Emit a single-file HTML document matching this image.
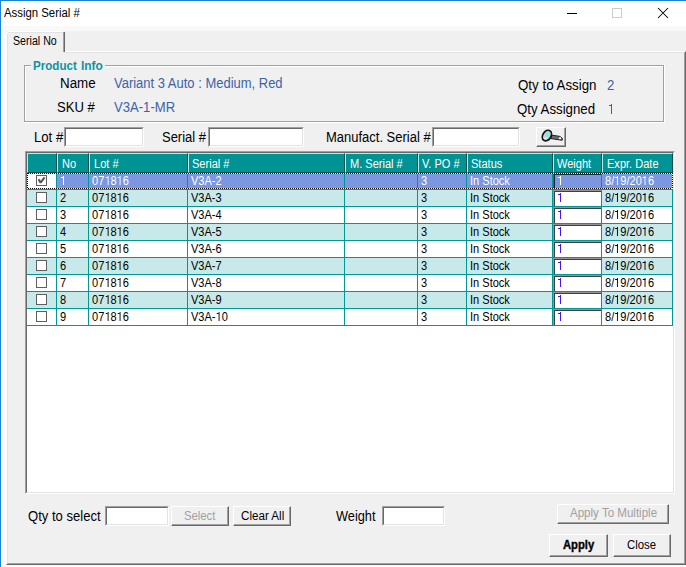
<!DOCTYPE html>
<html><head><meta charset="utf-8">
<style>
*{margin:0;padding:0;box-sizing:border-box}
html,body{width:686px;height:567px;overflow:hidden}
body{position:relative;background:#f0f0f0;font-family:"Liberation Sans",sans-serif;color:#000}
.a{position:absolute}
.t{position:absolute;white-space:nowrap;line-height:1;transform-origin:0 0}
.tb{position:absolute;background:#fff;border-top:1px solid #a0a0a0;border-left:1px solid #a0a0a0;border-right:1px solid #fff;border-bottom:1px solid #fff}
.tb:after{content:"";position:absolute;left:0;top:0;right:0;bottom:0;border-top:1px solid #696969;border-left:1px solid #696969;border-right:1px solid #e3e3e3;border-bottom:1px solid #e3e3e3}
.btn{position:absolute;background:#f0f0f0;border-top:1px solid #fff;border-left:1px solid #fff;border-right:1px solid #696969;border-bottom:1px solid #696969}
.btn:after{content:"";position:absolute;left:0;top:0;right:0;bottom:0;border-right:1px solid #a0a0a0;border-bottom:1px solid #a0a0a0}
.g{font-size:12px;transform:scaleX(0.92)}
.o{display:inline-block;width:6.67px;height:9px;position:relative;font-style:normal}
.o:before{content:'';position:absolute;left:3.3px;top:0;width:1.15px;height:9px;background:currentColor}
.o:after{content:'';position:absolute;left:1.3px;top:1px;width:2.2px;height:1px;background:currentColor}
</style></head><body>

<div class="a" style="left:0;top:0;width:686px;height:26px;background:#fff"></div>
<div class="a" style="left:0;top:0;width:686px;height:1px;background:#1883d7"></div>
<div class="a" style="left:0;top:0;width:1px;height:567px;background:#1883d7"></div>
<div class="t" style="left:4.40px;top:7px;font-size:12.5px;transform:scaleX(0.909);">Assign Serial #</div>
<div class="a" style="left:567px;top:13px;width:10px;height:1px;background:#000"></div>
<div class="a" style="left:612px;top:8px;width:10px;height:10px;border:1px solid #cccccc"></div>
<svg class="a" style="left:657px;top:7px" width="12" height="12" viewBox="0 0 12 12"><path d="M1 1L11 11M11 1L1 11" stroke="#000" stroke-width="1.05" fill="none"/></svg>
<div class="a" style="left:1px;top:26px;width:685px;height:5px;background:#f9f9f9"></div>
<div class="a" style="left:1px;top:26px;width:5px;height:541px;background:#f9f9f9"></div>
<div class="a" style="left:1px;top:565px;width:685px;height:2px;background:#f9f9f9"></div>
<div class="a" style="left:1px;top:26px;width:1px;height:541px;background:#fff"></div>
<div class="a" style="left:6px;top:51px;width:680px;height:514px;border-top:1px solid #fff;border-left:1px solid #fff;border-right:1px solid #696969;border-bottom:1px solid #696969"></div>
<div class="a" style="left:7px;top:52px;width:678px;height:512px;border-top:1px solid #e3e3e3;border-left:1px solid #e3e3e3;border-right:1px solid #a0a0a0;border-bottom:1px solid #a0a0a0"></div>
<div class="a" style="left:7px;top:32px;width:57px;height:22px;background:#f0f0f0"></div>
<div class="a" style="left:8px;top:31px;width:55px;height:1px;background:#fff"></div>
<div class="a" style="left:8px;top:32px;width:55px;height:1px;background:#e3e3e3"></div>
<div class="a" style="left:7px;top:32px;width:1px;height:1px;background:#fff"></div>
<div class="a" style="left:6px;top:33px;width:1px;height:20px;background:#fff"></div>
<div class="a" style="left:7px;top:33px;width:1px;height:20px;background:#e3e3e3"></div>
<div class="a" style="left:63px;top:32px;width:1px;height:20px;background:#a0a0a0"></div>
<div class="a" style="left:64px;top:32px;width:1px;height:20px;background:#696969"></div>
<div class="t" style="left:13.31px;top:35px;font-size:12px;transform:scaleX(0.886);">Serial No</div>
<div class="a" style="left:24px;top:65px;width:640px;height:57px;border:1px solid #a0a0a0"></div>
<div class="a" style="left:25px;top:66px;width:638px;height:55px;border-left:1px solid #fff;border-top:1px solid #fff"></div>
<div class="a" style="left:24px;top:122px;width:641px;height:1px;background:#fff"></div>
<div class="a" style="left:664px;top:65px;width:1px;height:58px;background:#fff"></div>
<div class="a" style="left:31px;top:60px;width:74px;height:10px;background:#f0f0f0"></div>
<div class="t" style="left:32.87px;top:60px;font-size:12.5px;transform:scaleX(0.927);font-weight:bold;color:#0a95a0;">Product</div>
<div class="t" style="left:80.75px;top:60px;font-size:12.5px;transform:scaleX(0.953);font-weight:bold;color:#0a95a0;">Info</div>
<div class="t" style="left:59.65px;top:76px;font-size:14px;transform:scaleX(0.955);">Name</div>
<div class="t" style="left:56.67px;top:100px;font-size:14px;transform:scaleX(0.934);">SKU #</div>
<div class="t" style="left:518.40px;top:78px;font-size:14px;transform:scaleX(0.952);">Qty to Assign</div>
<div class="t" style="left:517.40px;top:102px;font-size:14px;transform:scaleX(0.947);">Qty Assigned</div>
<div class="t" style="left:33.66px;top:130px;font-size:14px;transform:scaleX(0.939);">Lot #</div>
<div class="t" style="left:162.27px;top:130px;font-size:14px;transform:scaleX(0.927);">Serial #</div>
<div class="t" style="left:325.67px;top:130px;font-size:14px;transform:scaleX(0.927);">Manufact. Serial #</div>
<div class="t" style="left:27.50px;top:509px;font-size:14px;transform:scaleX(0.933);">Qty to select</div>
<div class="t" style="left:336.00px;top:509px;font-size:14px;transform:scaleX(0.912);">Weight</div>
<div class="t" style="left:114.20px;top:76px;font-size:14px;transform:scaleX(0.927);color:#3b63a8;">Variant 3 Auto : Medium, Red</div>
<div class="t" style="left:114.20px;top:100px;font-size:14px;transform:scaleX(0.935);color:#3b63a8;">V3A-1-MR</div>
<div class="t" style="left:607.10px;top:78px;font-size:14px;transform:scaleX(0.940);color:#3b63a8;">2</div>
<div class="a" style="left:610.8px;top:104px;width:1.3px;height:10px;background:#3b63a8"></div><div class="a" style="left:608.5px;top:105px;width:2.3px;height:1px;background:#3b63a8"></div>
<div class="tb" style="left:64px;top:127px;width:80px;height:20px"></div>
<div class="tb" style="left:208px;top:127px;width:96px;height:20px"></div>
<div class="tb" style="left:432px;top:127px;width:88px;height:20px"></div>
<div class="btn" style="left:536px;top:127px;width:30px;height:20px"></div>
<svg class="a" style="left:540px;top:128px" width="25" height="16" viewBox="0 0 25 16">
<path d="M11 7L19.8 8.4L22.4 10.4L22.2 12.2L19.8 11.9L11 10.6Z" fill="#6e6e6e" stroke="#1e1e1e" stroke-width="1"/>
<ellipse cx="20" cy="10.2" rx="1.2" ry="1" fill="#fff"/>
<ellipse cx="6.9" cy="7.6" rx="5.6" ry="4.1" transform="rotate(-58 6.9 7.6)" fill="#d8d8d8" stroke="#161616" stroke-width="1.8"/>
<ellipse cx="7.5" cy="6.7" rx="3.6" ry="2.2" transform="rotate(-58 7.5 6.7)" fill="#8ce4f0"/>
<path d="M4.5 10.8L6.8 9.2" stroke="#fff" stroke-width="1"/>
</svg>
<div class="a" style="left:25px;top:151px;width:650px;height:343px;background:#fff;border-top:1px solid #a0a0a0;border-left:1px solid #a0a0a0;border-right:1px solid #fff;border-bottom:1px solid #fff"></div>
<div class="a" style="left:26px;top:152px;width:648px;height:341px;border-top:1px solid #696969;border-left:1px solid #696969;border-right:1px solid #e3e3e3;border-bottom:1px solid #e3e3e3"></div>
<div class="a" style="left:27px;top:153px;width:30px;height:20px;background:#009393;border-top:1px solid #bfe9e7;border-left:1px solid #bfe9e7;border-right:1px solid #005050;border-bottom:1px solid #005050"></div>
<div class="a" style="left:57px;top:153px;width:32px;height:20px;background:#009393;border-top:1px solid #bfe9e7;border-left:1px solid #bfe9e7;border-right:1px solid #005050;border-bottom:1px solid #005050"></div>
<div class="t g" style="left:61.5px;top:158px;color:#fff">No</div>
<div class="a" style="left:89px;top:153px;width:99px;height:20px;background:#009393;border-top:1px solid #bfe9e7;border-left:1px solid #bfe9e7;border-right:1px solid #005050;border-bottom:1px solid #005050"></div>
<div class="t g" style="left:93.5px;top:158px;color:#fff">Lot #</div>
<div class="a" style="left:188px;top:153px;width:157px;height:20px;background:#009393;border-top:1px solid #bfe9e7;border-left:1px solid #bfe9e7;border-right:1px solid #005050;border-bottom:1px solid #005050"></div>
<div class="t g" style="left:191.7px;top:158px;color:#fff">Serial #</div>
<div class="a" style="left:345px;top:153px;width:73px;height:20px;background:#009393;border-top:1px solid #bfe9e7;border-left:1px solid #bfe9e7;border-right:1px solid #005050;border-bottom:1px solid #005050"></div>
<div class="t g" style="left:349.5px;top:158px;color:#fff">M. Serial #</div>
<div class="a" style="left:418px;top:153px;width:49px;height:20px;background:#009393;border-top:1px solid #bfe9e7;border-left:1px solid #bfe9e7;border-right:1px solid #005050;border-bottom:1px solid #005050"></div>
<div class="t g" style="left:422px;top:158px;color:#fff">V. PO #</div>
<div class="a" style="left:467px;top:153px;width:86px;height:20px;background:#009393;border-top:1px solid #bfe9e7;border-left:1px solid #bfe9e7;border-right:1px solid #005050;border-bottom:1px solid #005050"></div>
<div class="t g" style="left:471px;top:158px;color:#fff">Status</div>
<div class="a" style="left:553px;top:153px;width:49px;height:20px;background:#009393;border-top:1px solid #bfe9e7;border-left:1px solid #bfe9e7;border-right:1px solid #005050;border-bottom:1px solid #005050"></div>
<div class="t g" style="left:557px;top:158px;color:#fff">Weight</div>
<div class="a" style="left:602px;top:153px;width:71px;height:20px;background:#009393;border-top:1px solid #bfe9e7;border-left:1px solid #bfe9e7;border-right:1px solid #005050;border-bottom:1px solid #005050"></div>
<div class="t g" style="left:606.5px;top:158px;color:#fff">Expr. Date</div>
<div class="a" style="left:27px;top:173px;width:30px;height:17px;background:#fff;border-right:1px solid #009796;border-bottom:1px solid #009796"></div>
<div class="a" style="left:57px;top:173px;width:32px;height:17px;background:#7a97df;border-right:1px solid #009796;border-bottom:1px solid #009796"></div>
<div class="a" style="left:89px;top:173px;width:99px;height:17px;background:#7a97df;border-right:1px solid #009796;border-bottom:1px solid #009796"></div>
<div class="a" style="left:188px;top:173px;width:157px;height:17px;background:#7a97df;border-right:1px solid #009796;border-bottom:1px solid #009796"></div>
<div class="a" style="left:345px;top:173px;width:73px;height:17px;background:#7a97df;border-right:1px solid #009796;border-bottom:1px solid #009796"></div>
<div class="a" style="left:418px;top:173px;width:49px;height:17px;background:#7a97df;border-right:1px solid #009796;border-bottom:1px solid #009796"></div>
<div class="a" style="left:467px;top:173px;width:86px;height:17px;background:#7a97df;border-right:1px solid #009796;border-bottom:1px solid #009796"></div>
<div class="a" style="left:553px;top:173px;width:49px;height:17px;background:#7a97df;border-right:1px solid #009796;border-bottom:1px solid #009796"></div>
<div class="a" style="left:602px;top:173px;width:71px;height:17px;background:#7a97df;border-right:1px solid #009796;border-bottom:1px solid #009796"></div>
<div class="a" style="left:36px;top:175px;width:11px;height:11px;background:#fff;border:1px solid #5f5f5f"></div>
<svg class="a" style="left:36px;top:175px" width="11" height="11" viewBox="0 0 11 11"><path d="M2.6 4.3L4.6 7.6L8.6 2.4" stroke="#555" stroke-width="2.1" stroke-linejoin="bevel" fill="none"/></svg>
<div class="t g" style="left:92px;top:175px;color:#fff">07<i class="o"></i>8<i class="o"></i>6</div>
<div class="t g" style="left:191px;top:175px;color:#fff">V3A-2</div>
<div class="t g" style="left:421px;top:175px;color:#fff">3</div>
<div class="t g" style="left:470px;top:175px;color:#fff">In Stock</div>
<div class="t g" style="left:605px;top:175px;color:#fff">8/<i class="o"></i>9/20<i class="o"></i>6</div>
<div class="a" style="left:553px;top:173px;width:48px;height:16px;background:#7a97df;border-top:1px solid rgba(0,0,0,.42);border-left:1px solid rgba(0,0,0,.42)"></div>
<div class="a" style="left:554px;top:174px;width:47px;height:15px;border-top:1px solid rgba(0,0,0,.75);border-left:1px solid rgba(0,0,0,.75)"></div>
<div class="a" style="left:560px;top:176px;width:1.3px;height:9px;background:#fff"></div><div class="a" style="left:558px;top:177px;width:2px;height:1px;background:#fff"></div>
<div class="a" style="left:63px;top:176px;width:1.1px;height:9px;background:#fff"></div><div class="a" style="left:61px;top:177px;width:2px;height:1px;background:#fff"></div>
<div class="a" style="left:27px;top:190px;width:30px;height:17px;background:#c8e9e9;border-right:1px solid #009796;border-bottom:1px solid #009796"></div>
<div class="a" style="left:57px;top:190px;width:32px;height:17px;background:#c8e9e9;border-right:1px solid #009796;border-bottom:1px solid #009796"></div>
<div class="a" style="left:89px;top:190px;width:99px;height:17px;background:#c8e9e9;border-right:1px solid #009796;border-bottom:1px solid #009796"></div>
<div class="a" style="left:188px;top:190px;width:157px;height:17px;background:#c8e9e9;border-right:1px solid #009796;border-bottom:1px solid #009796"></div>
<div class="a" style="left:345px;top:190px;width:73px;height:17px;background:#c8e9e9;border-right:1px solid #009796;border-bottom:1px solid #009796"></div>
<div class="a" style="left:418px;top:190px;width:49px;height:17px;background:#c8e9e9;border-right:1px solid #009796;border-bottom:1px solid #009796"></div>
<div class="a" style="left:467px;top:190px;width:86px;height:17px;background:#c8e9e9;border-right:1px solid #009796;border-bottom:1px solid #009796"></div>
<div class="a" style="left:553px;top:190px;width:49px;height:17px;background:#c8e9e9;border-right:1px solid #009796;border-bottom:1px solid #009796"></div>
<div class="a" style="left:602px;top:190px;width:71px;height:17px;background:#c8e9e9;border-right:1px solid #009796;border-bottom:1px solid #009796"></div>
<div class="a" style="left:36px;top:192px;width:11px;height:11px;background:#fff;border:1px solid #5f5f5f"></div>
<div class="t g" style="left:60px;top:192px;color:#000">2</div>
<div class="t g" style="left:92px;top:192px;color:#000">07<i class="o"></i>8<i class="o"></i>6</div>
<div class="t g" style="left:191px;top:192px;color:#000">V3A-3</div>
<div class="t g" style="left:421px;top:192px;color:#000">3</div>
<div class="t g" style="left:470px;top:192px;color:#000">In Stock</div>
<div class="t g" style="left:605px;top:192px;color:#000">8/<i class="o"></i>9/20<i class="o"></i>6</div>
<div class="a" style="left:553px;top:190px;width:48px;height:16px;background:#fff;border-top:1px solid rgba(0,0,0,.42);border-left:1px solid rgba(0,0,0,.42)"></div>
<div class="a" style="left:554px;top:191px;width:47px;height:15px;border-top:1px solid rgba(0,0,0,.75);border-left:1px solid rgba(0,0,0,.75)"></div>
<div class="a" style="left:560px;top:193px;width:1.3px;height:9px;background:#4a14f2"></div><div class="a" style="left:558px;top:194px;width:2px;height:1px;background:#4a14f2"></div>
<div class="a" style="left:27px;top:207px;width:30px;height:17px;background:#fff;border-right:1px solid #009796;border-bottom:1px solid #009796"></div>
<div class="a" style="left:57px;top:207px;width:32px;height:17px;background:#fff;border-right:1px solid #009796;border-bottom:1px solid #009796"></div>
<div class="a" style="left:89px;top:207px;width:99px;height:17px;background:#fff;border-right:1px solid #009796;border-bottom:1px solid #009796"></div>
<div class="a" style="left:188px;top:207px;width:157px;height:17px;background:#fff;border-right:1px solid #009796;border-bottom:1px solid #009796"></div>
<div class="a" style="left:345px;top:207px;width:73px;height:17px;background:#fff;border-right:1px solid #009796;border-bottom:1px solid #009796"></div>
<div class="a" style="left:418px;top:207px;width:49px;height:17px;background:#fff;border-right:1px solid #009796;border-bottom:1px solid #009796"></div>
<div class="a" style="left:467px;top:207px;width:86px;height:17px;background:#fff;border-right:1px solid #009796;border-bottom:1px solid #009796"></div>
<div class="a" style="left:553px;top:207px;width:49px;height:17px;background:#fff;border-right:1px solid #009796;border-bottom:1px solid #009796"></div>
<div class="a" style="left:602px;top:207px;width:71px;height:17px;background:#fff;border-right:1px solid #009796;border-bottom:1px solid #009796"></div>
<div class="a" style="left:36px;top:209px;width:11px;height:11px;background:#fff;border:1px solid #5f5f5f"></div>
<div class="t g" style="left:60px;top:209px;color:#000">3</div>
<div class="t g" style="left:92px;top:209px;color:#000">07<i class="o"></i>8<i class="o"></i>6</div>
<div class="t g" style="left:191px;top:209px;color:#000">V3A-4</div>
<div class="t g" style="left:421px;top:209px;color:#000">3</div>
<div class="t g" style="left:470px;top:209px;color:#000">In Stock</div>
<div class="t g" style="left:605px;top:209px;color:#000">8/<i class="o"></i>9/20<i class="o"></i>6</div>
<div class="a" style="left:553px;top:207px;width:48px;height:16px;background:#fff;border-top:1px solid rgba(0,0,0,.42);border-left:1px solid rgba(0,0,0,.42)"></div>
<div class="a" style="left:554px;top:208px;width:47px;height:15px;border-top:1px solid rgba(0,0,0,.75);border-left:1px solid rgba(0,0,0,.75)"></div>
<div class="a" style="left:560px;top:210px;width:1.3px;height:9px;background:#4a14f2"></div><div class="a" style="left:558px;top:211px;width:2px;height:1px;background:#4a14f2"></div>
<div class="a" style="left:27px;top:224px;width:30px;height:17px;background:#c8e9e9;border-right:1px solid #009796;border-bottom:1px solid #009796"></div>
<div class="a" style="left:57px;top:224px;width:32px;height:17px;background:#c8e9e9;border-right:1px solid #009796;border-bottom:1px solid #009796"></div>
<div class="a" style="left:89px;top:224px;width:99px;height:17px;background:#c8e9e9;border-right:1px solid #009796;border-bottom:1px solid #009796"></div>
<div class="a" style="left:188px;top:224px;width:157px;height:17px;background:#c8e9e9;border-right:1px solid #009796;border-bottom:1px solid #009796"></div>
<div class="a" style="left:345px;top:224px;width:73px;height:17px;background:#c8e9e9;border-right:1px solid #009796;border-bottom:1px solid #009796"></div>
<div class="a" style="left:418px;top:224px;width:49px;height:17px;background:#c8e9e9;border-right:1px solid #009796;border-bottom:1px solid #009796"></div>
<div class="a" style="left:467px;top:224px;width:86px;height:17px;background:#c8e9e9;border-right:1px solid #009796;border-bottom:1px solid #009796"></div>
<div class="a" style="left:553px;top:224px;width:49px;height:17px;background:#c8e9e9;border-right:1px solid #009796;border-bottom:1px solid #009796"></div>
<div class="a" style="left:602px;top:224px;width:71px;height:17px;background:#c8e9e9;border-right:1px solid #009796;border-bottom:1px solid #009796"></div>
<div class="a" style="left:36px;top:226px;width:11px;height:11px;background:#fff;border:1px solid #5f5f5f"></div>
<div class="t g" style="left:60px;top:226px;color:#000">4</div>
<div class="t g" style="left:92px;top:226px;color:#000">07<i class="o"></i>8<i class="o"></i>6</div>
<div class="t g" style="left:191px;top:226px;color:#000">V3A-5</div>
<div class="t g" style="left:421px;top:226px;color:#000">3</div>
<div class="t g" style="left:470px;top:226px;color:#000">In Stock</div>
<div class="t g" style="left:605px;top:226px;color:#000">8/<i class="o"></i>9/20<i class="o"></i>6</div>
<div class="a" style="left:553px;top:224px;width:48px;height:16px;background:#fff;border-top:1px solid rgba(0,0,0,.42);border-left:1px solid rgba(0,0,0,.42)"></div>
<div class="a" style="left:554px;top:225px;width:47px;height:15px;border-top:1px solid rgba(0,0,0,.75);border-left:1px solid rgba(0,0,0,.75)"></div>
<div class="a" style="left:560px;top:227px;width:1.3px;height:9px;background:#4a14f2"></div><div class="a" style="left:558px;top:228px;width:2px;height:1px;background:#4a14f2"></div>
<div class="a" style="left:27px;top:241px;width:30px;height:17px;background:#fff;border-right:1px solid #009796;border-bottom:1px solid #009796"></div>
<div class="a" style="left:57px;top:241px;width:32px;height:17px;background:#fff;border-right:1px solid #009796;border-bottom:1px solid #009796"></div>
<div class="a" style="left:89px;top:241px;width:99px;height:17px;background:#fff;border-right:1px solid #009796;border-bottom:1px solid #009796"></div>
<div class="a" style="left:188px;top:241px;width:157px;height:17px;background:#fff;border-right:1px solid #009796;border-bottom:1px solid #009796"></div>
<div class="a" style="left:345px;top:241px;width:73px;height:17px;background:#fff;border-right:1px solid #009796;border-bottom:1px solid #009796"></div>
<div class="a" style="left:418px;top:241px;width:49px;height:17px;background:#fff;border-right:1px solid #009796;border-bottom:1px solid #009796"></div>
<div class="a" style="left:467px;top:241px;width:86px;height:17px;background:#fff;border-right:1px solid #009796;border-bottom:1px solid #009796"></div>
<div class="a" style="left:553px;top:241px;width:49px;height:17px;background:#fff;border-right:1px solid #009796;border-bottom:1px solid #009796"></div>
<div class="a" style="left:602px;top:241px;width:71px;height:17px;background:#fff;border-right:1px solid #009796;border-bottom:1px solid #009796"></div>
<div class="a" style="left:36px;top:243px;width:11px;height:11px;background:#fff;border:1px solid #5f5f5f"></div>
<div class="t g" style="left:60px;top:243px;color:#000">5</div>
<div class="t g" style="left:92px;top:243px;color:#000">07<i class="o"></i>8<i class="o"></i>6</div>
<div class="t g" style="left:191px;top:243px;color:#000">V3A-6</div>
<div class="t g" style="left:421px;top:243px;color:#000">3</div>
<div class="t g" style="left:470px;top:243px;color:#000">In Stock</div>
<div class="t g" style="left:605px;top:243px;color:#000">8/<i class="o"></i>9/20<i class="o"></i>6</div>
<div class="a" style="left:553px;top:241px;width:48px;height:16px;background:#fff;border-top:1px solid rgba(0,0,0,.42);border-left:1px solid rgba(0,0,0,.42)"></div>
<div class="a" style="left:554px;top:242px;width:47px;height:15px;border-top:1px solid rgba(0,0,0,.75);border-left:1px solid rgba(0,0,0,.75)"></div>
<div class="a" style="left:560px;top:244px;width:1.3px;height:9px;background:#4a14f2"></div><div class="a" style="left:558px;top:245px;width:2px;height:1px;background:#4a14f2"></div>
<div class="a" style="left:27px;top:258px;width:30px;height:17px;background:#c8e9e9;border-right:1px solid #009796;border-bottom:1px solid #009796"></div>
<div class="a" style="left:57px;top:258px;width:32px;height:17px;background:#c8e9e9;border-right:1px solid #009796;border-bottom:1px solid #009796"></div>
<div class="a" style="left:89px;top:258px;width:99px;height:17px;background:#c8e9e9;border-right:1px solid #009796;border-bottom:1px solid #009796"></div>
<div class="a" style="left:188px;top:258px;width:157px;height:17px;background:#c8e9e9;border-right:1px solid #009796;border-bottom:1px solid #009796"></div>
<div class="a" style="left:345px;top:258px;width:73px;height:17px;background:#c8e9e9;border-right:1px solid #009796;border-bottom:1px solid #009796"></div>
<div class="a" style="left:418px;top:258px;width:49px;height:17px;background:#c8e9e9;border-right:1px solid #009796;border-bottom:1px solid #009796"></div>
<div class="a" style="left:467px;top:258px;width:86px;height:17px;background:#c8e9e9;border-right:1px solid #009796;border-bottom:1px solid #009796"></div>
<div class="a" style="left:553px;top:258px;width:49px;height:17px;background:#c8e9e9;border-right:1px solid #009796;border-bottom:1px solid #009796"></div>
<div class="a" style="left:602px;top:258px;width:71px;height:17px;background:#c8e9e9;border-right:1px solid #009796;border-bottom:1px solid #009796"></div>
<div class="a" style="left:36px;top:260px;width:11px;height:11px;background:#fff;border:1px solid #5f5f5f"></div>
<div class="t g" style="left:60px;top:260px;color:#000">6</div>
<div class="t g" style="left:92px;top:260px;color:#000">07<i class="o"></i>8<i class="o"></i>6</div>
<div class="t g" style="left:191px;top:260px;color:#000">V3A-7</div>
<div class="t g" style="left:421px;top:260px;color:#000">3</div>
<div class="t g" style="left:470px;top:260px;color:#000">In Stock</div>
<div class="t g" style="left:605px;top:260px;color:#000">8/<i class="o"></i>9/20<i class="o"></i>6</div>
<div class="a" style="left:553px;top:258px;width:48px;height:16px;background:#fff;border-top:1px solid rgba(0,0,0,.42);border-left:1px solid rgba(0,0,0,.42)"></div>
<div class="a" style="left:554px;top:259px;width:47px;height:15px;border-top:1px solid rgba(0,0,0,.75);border-left:1px solid rgba(0,0,0,.75)"></div>
<div class="a" style="left:560px;top:261px;width:1.3px;height:9px;background:#4a14f2"></div><div class="a" style="left:558px;top:262px;width:2px;height:1px;background:#4a14f2"></div>
<div class="a" style="left:27px;top:275px;width:30px;height:17px;background:#fff;border-right:1px solid #009796;border-bottom:1px solid #009796"></div>
<div class="a" style="left:57px;top:275px;width:32px;height:17px;background:#fff;border-right:1px solid #009796;border-bottom:1px solid #009796"></div>
<div class="a" style="left:89px;top:275px;width:99px;height:17px;background:#fff;border-right:1px solid #009796;border-bottom:1px solid #009796"></div>
<div class="a" style="left:188px;top:275px;width:157px;height:17px;background:#fff;border-right:1px solid #009796;border-bottom:1px solid #009796"></div>
<div class="a" style="left:345px;top:275px;width:73px;height:17px;background:#fff;border-right:1px solid #009796;border-bottom:1px solid #009796"></div>
<div class="a" style="left:418px;top:275px;width:49px;height:17px;background:#fff;border-right:1px solid #009796;border-bottom:1px solid #009796"></div>
<div class="a" style="left:467px;top:275px;width:86px;height:17px;background:#fff;border-right:1px solid #009796;border-bottom:1px solid #009796"></div>
<div class="a" style="left:553px;top:275px;width:49px;height:17px;background:#fff;border-right:1px solid #009796;border-bottom:1px solid #009796"></div>
<div class="a" style="left:602px;top:275px;width:71px;height:17px;background:#fff;border-right:1px solid #009796;border-bottom:1px solid #009796"></div>
<div class="a" style="left:36px;top:277px;width:11px;height:11px;background:#fff;border:1px solid #5f5f5f"></div>
<div class="t g" style="left:60px;top:277px;color:#000">7</div>
<div class="t g" style="left:92px;top:277px;color:#000">07<i class="o"></i>8<i class="o"></i>6</div>
<div class="t g" style="left:191px;top:277px;color:#000">V3A-8</div>
<div class="t g" style="left:421px;top:277px;color:#000">3</div>
<div class="t g" style="left:470px;top:277px;color:#000">In Stock</div>
<div class="t g" style="left:605px;top:277px;color:#000">8/<i class="o"></i>9/20<i class="o"></i>6</div>
<div class="a" style="left:553px;top:275px;width:48px;height:16px;background:#fff;border-top:1px solid rgba(0,0,0,.42);border-left:1px solid rgba(0,0,0,.42)"></div>
<div class="a" style="left:554px;top:276px;width:47px;height:15px;border-top:1px solid rgba(0,0,0,.75);border-left:1px solid rgba(0,0,0,.75)"></div>
<div class="a" style="left:560px;top:278px;width:1.3px;height:9px;background:#4a14f2"></div><div class="a" style="left:558px;top:279px;width:2px;height:1px;background:#4a14f2"></div>
<div class="a" style="left:27px;top:292px;width:30px;height:17px;background:#c8e9e9;border-right:1px solid #009796;border-bottom:1px solid #009796"></div>
<div class="a" style="left:57px;top:292px;width:32px;height:17px;background:#c8e9e9;border-right:1px solid #009796;border-bottom:1px solid #009796"></div>
<div class="a" style="left:89px;top:292px;width:99px;height:17px;background:#c8e9e9;border-right:1px solid #009796;border-bottom:1px solid #009796"></div>
<div class="a" style="left:188px;top:292px;width:157px;height:17px;background:#c8e9e9;border-right:1px solid #009796;border-bottom:1px solid #009796"></div>
<div class="a" style="left:345px;top:292px;width:73px;height:17px;background:#c8e9e9;border-right:1px solid #009796;border-bottom:1px solid #009796"></div>
<div class="a" style="left:418px;top:292px;width:49px;height:17px;background:#c8e9e9;border-right:1px solid #009796;border-bottom:1px solid #009796"></div>
<div class="a" style="left:467px;top:292px;width:86px;height:17px;background:#c8e9e9;border-right:1px solid #009796;border-bottom:1px solid #009796"></div>
<div class="a" style="left:553px;top:292px;width:49px;height:17px;background:#c8e9e9;border-right:1px solid #009796;border-bottom:1px solid #009796"></div>
<div class="a" style="left:602px;top:292px;width:71px;height:17px;background:#c8e9e9;border-right:1px solid #009796;border-bottom:1px solid #009796"></div>
<div class="a" style="left:36px;top:294px;width:11px;height:11px;background:#fff;border:1px solid #5f5f5f"></div>
<div class="t g" style="left:60px;top:294px;color:#000">8</div>
<div class="t g" style="left:92px;top:294px;color:#000">07<i class="o"></i>8<i class="o"></i>6</div>
<div class="t g" style="left:191px;top:294px;color:#000">V3A-9</div>
<div class="t g" style="left:421px;top:294px;color:#000">3</div>
<div class="t g" style="left:470px;top:294px;color:#000">In Stock</div>
<div class="t g" style="left:605px;top:294px;color:#000">8/<i class="o"></i>9/20<i class="o"></i>6</div>
<div class="a" style="left:553px;top:292px;width:48px;height:16px;background:#fff;border-top:1px solid rgba(0,0,0,.42);border-left:1px solid rgba(0,0,0,.42)"></div>
<div class="a" style="left:554px;top:293px;width:47px;height:15px;border-top:1px solid rgba(0,0,0,.75);border-left:1px solid rgba(0,0,0,.75)"></div>
<div class="a" style="left:560px;top:295px;width:1.3px;height:9px;background:#4a14f2"></div><div class="a" style="left:558px;top:296px;width:2px;height:1px;background:#4a14f2"></div>
<div class="a" style="left:27px;top:309px;width:30px;height:17px;background:#fff;border-right:1px solid #009796;border-bottom:1px solid #009796"></div>
<div class="a" style="left:57px;top:309px;width:32px;height:17px;background:#fff;border-right:1px solid #009796;border-bottom:1px solid #009796"></div>
<div class="a" style="left:89px;top:309px;width:99px;height:17px;background:#fff;border-right:1px solid #009796;border-bottom:1px solid #009796"></div>
<div class="a" style="left:188px;top:309px;width:157px;height:17px;background:#fff;border-right:1px solid #009796;border-bottom:1px solid #009796"></div>
<div class="a" style="left:345px;top:309px;width:73px;height:17px;background:#fff;border-right:1px solid #009796;border-bottom:1px solid #009796"></div>
<div class="a" style="left:418px;top:309px;width:49px;height:17px;background:#fff;border-right:1px solid #009796;border-bottom:1px solid #009796"></div>
<div class="a" style="left:467px;top:309px;width:86px;height:17px;background:#fff;border-right:1px solid #009796;border-bottom:1px solid #009796"></div>
<div class="a" style="left:553px;top:309px;width:49px;height:17px;background:#fff;border-right:1px solid #009796;border-bottom:1px solid #009796"></div>
<div class="a" style="left:602px;top:309px;width:71px;height:17px;background:#fff;border-right:1px solid #009796;border-bottom:1px solid #009796"></div>
<div class="a" style="left:36px;top:311px;width:11px;height:11px;background:#fff;border:1px solid #5f5f5f"></div>
<div class="t g" style="left:60px;top:311px;color:#000">9</div>
<div class="t g" style="left:92px;top:311px;color:#000">07<i class="o"></i>8<i class="o"></i>6</div>
<div class="t g" style="left:191px;top:311px;color:#000">V3A-<i class="o"></i>0</div>
<div class="t g" style="left:421px;top:311px;color:#000">3</div>
<div class="t g" style="left:470px;top:311px;color:#000">In Stock</div>
<div class="t g" style="left:605px;top:311px;color:#000">8/<i class="o"></i>9/20<i class="o"></i>6</div>
<div class="a" style="left:553px;top:309px;width:48px;height:16px;background:#fff;border-top:1px solid rgba(0,0,0,.42);border-left:1px solid rgba(0,0,0,.42)"></div>
<div class="a" style="left:554px;top:310px;width:47px;height:15px;border-top:1px solid rgba(0,0,0,.75);border-left:1px solid rgba(0,0,0,.75)"></div>
<div class="a" style="left:560px;top:312px;width:1.3px;height:9px;background:#4a14f2"></div><div class="a" style="left:558px;top:313px;width:2px;height:1px;background:#4a14f2"></div>
<div class="a" style="left:27px;top:173px;width:646px;height:1px;background:repeating-linear-gradient(90deg,#fff 0 1px,#000 1px 2px)"></div>
<div class="a" style="left:27px;top:188px;width:646px;height:1px;background:repeating-linear-gradient(90deg,#fff 0 1px,#000 1px 2px)"></div>
<div class="a" style="left:27px;top:173px;width:1px;height:16px;background:repeating-linear-gradient(180deg,#000 0 1px,#fff 1px 2px)"></div>
<div class="a" style="left:672px;top:173px;width:1px;height:16px;background:repeating-linear-gradient(180deg,#000 0 1px,#fff 1px 2px)"></div>
<div class="tb" style="left:105px;top:506px;width:64px;height:20px"></div>
<div class="btn" style="left:171px;top:506px;width:58px;height:20px"></div>
<div class="btn" style="left:233px;top:506px;width:58px;height:20px"></div>
<div class="tb" style="left:382px;top:506px;width:63px;height:20px"></div>
<div class="btn" style="left:557px;top:504px;width:112px;height:20px"></div>
<div class="btn" style="left:549px;top:534px;width:59px;height:23px"></div>
<div class="btn" style="left:613px;top:534px;width:58px;height:23px"></div>
<div class="t" style="left:184.46px;top:510px;font-size:12px;transform:scaleX(0.941);color:#a0a0a0;">Select</div>
<div class="t" style="left:241.20px;top:510px;font-size:12px;transform:scaleX(0.968);">Clear All</div>
<div class="t" style="left:570.00px;top:507px;font-size:12px;transform:scaleX(0.962);color:#a0a0a0;">Apply To Multiple</div>
<div class="t" style="left:563.20px;top:539px;font-size:12px;transform:scaleX(0.937);font-weight:bold;-webkit-text-stroke:0.35px #000;">Apply</div>
<div class="t" style="left:627.30px;top:539px;font-size:12px;transform:scaleX(0.947);">Close</div>
</body></html>
